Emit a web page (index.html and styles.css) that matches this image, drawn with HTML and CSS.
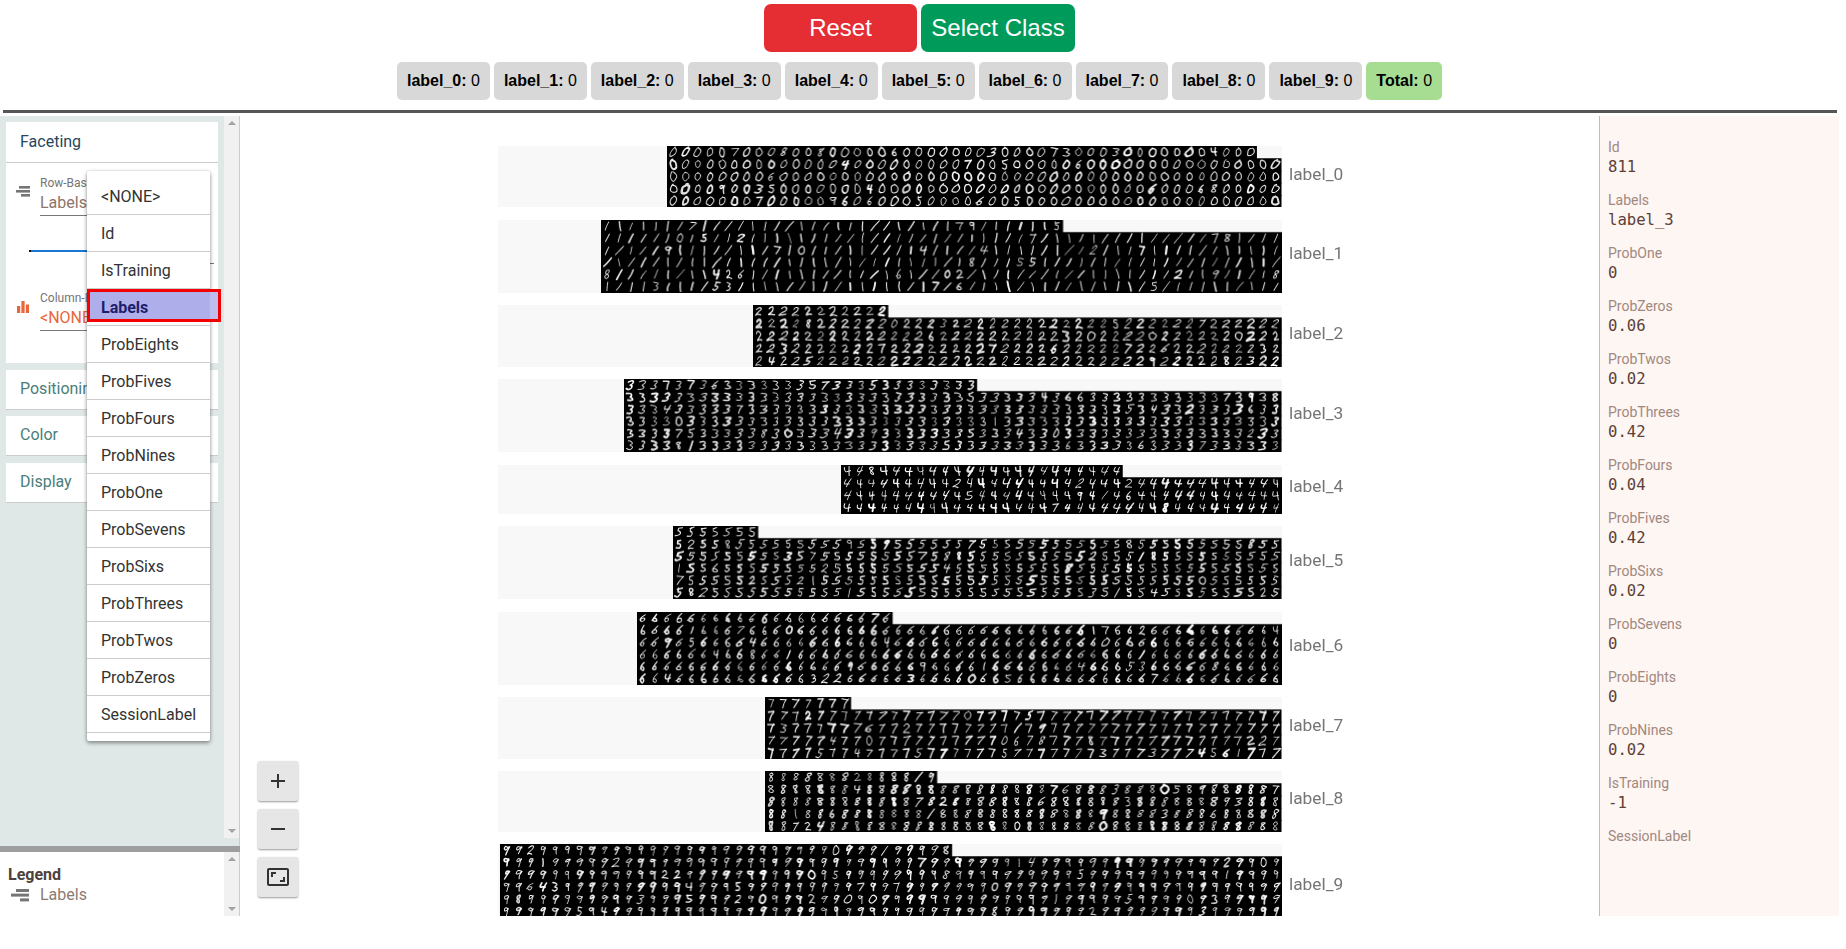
FILE: index.html
```html
<!DOCTYPE html>
<html>
<head>
  <title>Image Facets</title>
  <link rel="stylesheet" href="styles.css">
</head>
<body>
<div class="app">
  <div class="toolbar">
    <div class="actions">
      <button class="btn btn-reset">Reset</button>
      <button class="btn btn-select">Select Class</button>
    </div>
    <div class="counts">
      <span class="chip"><b>label_0:</b> 0</span>
      <span class="chip"><b>label_1:</b> 0</span>
      <span class="chip"><b>label_2:</b> 0</span>
      <span class="chip"><b>label_3:</b> 0</span>
      <span class="chip"><b>label_4:</b> 0</span>
      <span class="chip"><b>label_5:</b> 0</span>
      <span class="chip"><b>label_6:</b> 0</span>
      <span class="chip"><b>label_7:</b> 0</span>
      <span class="chip"><b>label_8:</b> 0</span>
      <span class="chip"><b>label_9:</b> 0</span>
      <span class="chip chip-total"><b>Total:</b> 0</span>
    </div>
  </div>
  <div class="divider"></div>

  <div class="workspace">
    <div class="sidebar">
      <div class="controls">
        <div class="controls-body">
          <div class="card">
            <div class="card-title">Faceting</div>
            <div class="card-body">
              <div class="field">
                <svg class="field-icon" width="14" height="11" viewBox="0 0 14 11"><rect x="3" y="0" width="11" height="2.6" fill="#757575"/><rect x="0" y="4" width="14" height="2.6" fill="#757575"/><rect x="5" y="8" width="9" height="2.6" fill="#757575"/></svg>
                <div class="field-text">
                  <div class="field-label">Row-Based Faceting</div>
                  <div class="field-value">Labels</div>
                </div>
              </div>
              <div class="slider"></div>
              <div class="slider-end"></div>
              <div class="field field-column">
                <svg class="field-icon" width="12" height="12" viewBox="0 0 12 12"><rect x="0" y="5" width="3.2" height="7" fill="#e9663a"/><rect x="4.4" y="0" width="3.2" height="12" fill="#e9663a"/><rect x="8.8" y="3.5" width="3.2" height="8.5" fill="#e9663a"/></svg>
                <div class="field-text">
                  <div class="field-label">Column-Based Faceting</div>
                  <div class="field-value field-value-none">&lt;NONE&gt;</div>
                </div>
              </div>
            </div>
          </div>
          <div class="card card-closed"><div class="card-title">Positioning</div></div>
          <div class="card card-closed"><div class="card-title">Color</div></div>
          <div class="card card-closed"><div class="card-title">Display</div></div>
        </div>
        <div class="scrollbar scrollbar-controls"><i class="arrow-up"></i><i class="arrow-down"></i></div>
      </div>
      <div class="resize-bar"></div>
      <div class="legend">
        <div class="legend-body">
          <div class="legend-title">Legend</div>
          <div class="legend-item">
            <svg width="18" height="13" viewBox="0 0 18 13"><rect x="5" y="0" width="13" height="3" fill="#757575"/><rect x="0" y="4.6" width="18" height="3" fill="#757575"/><rect x="9" y="9.4" width="9" height="3" fill="#757575"/></svg>
            <span>Labels</span>
          </div>
        </div>
        <div class="scrollbar"><i class="arrow-up"></i><i class="arrow-down"></i></div>
      </div>

      <ul class="menu">
        <li>&lt;NONE&gt;</li>
        <li>Id</li>
        <li>IsTraining</li>
        <li class="selected"><span>Labels</span></li>
        <li>ProbEights</li>
        <li>ProbFives</li>
        <li>ProbFours</li>
        <li>ProbNines</li>
        <li>ProbOne</li>
        <li>ProbSevens</li>
        <li>ProbSixs</li>
        <li>ProbThrees</li>
        <li>ProbTwos</li>
        <li>ProbZeros</li>
        <li>SessionLabel</li>
      </ul>
    </div>

    <div class="chart">
      <div id="facets" class="facets"></div>
      <div class="zoom-tools">
        <button class="zoom-btn"><svg width="24" height="24" viewBox="0 0 24 24"><path d="M19 13h-6v6h-2v-6H5v-2h6V5h2v6h6v2z"/></svg></button>
        <button class="zoom-btn"><svg width="24" height="24" viewBox="0 0 24 24"><path d="M19 13H5v-2h14v2z"/></svg></button>
        <button class="zoom-btn"><svg width="24" height="24" viewBox="0 0 24 24"><path d="M19 12h-2v3h-3v2h5v-5zM7 9h3V7H5v5h2V9zm14-6H3c-1.1 0-2 .9-2 2v14c0 1.1.9 2 2 2h18c1.1 0 2-.9 2-2V5c0-1.1-.9-2-2-2zm0 16.01H3V4.99h18v14.02z"/></svg></button>
      </div>
    </div>

    <div class="details">
      <div class="detail"><div class="detail-key">Id</div><div class="detail-value">811</div></div>
      <div class="detail"><div class="detail-key">Labels</div><div class="detail-value">label_3</div></div>
      <div class="detail"><div class="detail-key">ProbOne</div><div class="detail-value">0</div></div>
      <div class="detail"><div class="detail-key">ProbZeros</div><div class="detail-value">0.06</div></div>
      <div class="detail"><div class="detail-key">ProbTwos</div><div class="detail-value">0.02</div></div>
      <div class="detail"><div class="detail-key">ProbThrees</div><div class="detail-value">0.42</div></div>
      <div class="detail"><div class="detail-key">ProbFours</div><div class="detail-value">0.04</div></div>
      <div class="detail"><div class="detail-key">ProbFives</div><div class="detail-value">0.42</div></div>
      <div class="detail"><div class="detail-key">ProbSixs</div><div class="detail-value">0.02</div></div>
      <div class="detail"><div class="detail-key">ProbSevens</div><div class="detail-value">0</div></div>
      <div class="detail"><div class="detail-key">ProbEights</div><div class="detail-value">0</div></div>
      <div class="detail"><div class="detail-key">ProbNines</div><div class="detail-value">0.02</div></div>
      <div class="detail"><div class="detail-key">IsTraining</div><div class="detail-value">-1</div></div>
      <div class="detail"><div class="detail-key">SessionLabel</div><div class="detail-value"></div></div>
    </div>
  </div>
</div>
<script src="app.js"></script>
</body>
</html>
```

FILE: styles.css
```css
body {
  margin: 0;
  padding: 0;
  background-color: #fff;
  font-family: "Roboto", "Liberation Sans", sans-serif;
  overflow: hidden;
}

.app {
  width: 1839px;
}

/* top bar */
.toolbar {
  padding-top: 4px;
  font-family: "Liberation Sans", Arial, sans-serif;
}
.actions {
  display: flex;
  justify-content: center;
  gap: 4px;
}
.btn {
  height: 48px;
  width: 153px;
  padding: 0;
  border: none;
  border-radius: 7px;
  color: #fff;
  font-family: inherit;
  font-size: 24px;
}
.btn-reset {
  background-color: #e52d34;
}
.btn-select {
  width: 154px;
  background-color: #009b5b;
}
.counts {
  display: flex;
  justify-content: center;
  gap: 4px;
  margin-top: 10px;
}
.chip {
  height: 38px;
  line-height: 38px;
  padding: 0 10px;
  border-radius: 5px;
  background-color: #d8d8d8;
  color: #000;
  font-size: 16px;
}
.chip-total {
  background-color: #a6dd92;
}
.divider {
  height: 3px;
  margin: 10px 2px 3px 3px;
  background-color: #555;
}

.workspace {
  display: flex;
  height: 800px;
}

/* left column */
.sidebar {
  position: relative;
  flex: none;
  display: flex;
  flex-direction: column;
  width: 240px;
}
.controls {
  display: flex;
  height: 730px;
  background-color: #dfe8e6;
  border-right: 1px solid #ccc;
}
.controls-body {
  width: 224px;
  padding: 6px 6px 0 6px;
  box-sizing: border-box;
}
.scrollbar {
  position: relative;
  width: 15px;
  background-color: #f1f1f1;
}
.scrollbar-controls {
  height: 722px;
}
.arrow-up, .arrow-down {
  position: absolute;
  left: 4px;
  width: 0;
  height: 0;
  border-left: 4px solid transparent;
  border-right: 4px solid transparent;
}
.arrow-up {
  top: 5px;
  border-bottom: 4px solid #a3a3a3;
}
.arrow-down {
  bottom: 5px;
  border-top: 4px solid #a3a3a3;
}
.card {
  background-color: #fff;
  margin-bottom: 6.5px;
  font-size: 16px;
}
.card-title {
  height: 40px;
  line-height: 40px;
  padding-left: 14px;
  border-bottom: 1px solid #ccc;
  color: #26475c;
}
.card-closed .card-title {
  height: 39px;
  line-height: 38px;
  color: #4b7d79;
}
.card-body {
  height: 200px;
  padding-top: 13px;
  box-sizing: border-box;
}
.field {
  display: flex;
  height: 40px;
  padding-left: 10px;
}
.field-icon {
  flex: none;
  margin-top: 10px;
}
.field-text {
  width: 160px;
  margin-left: 10px;
  border-bottom: 1px solid #777;
  white-space: nowrap;
  overflow: hidden;
}
.field-label {
  font-size: 12px;
  line-height: 14px;
  color: #757575;
}
.field-value {
  font-size: 16px;
  line-height: 26px;
  color: #8d7468;
}
.field-value-none {
  color: #e9663a;
}
.field-column {
  margin-top: 27px;
}
.field-column .field-icon {
  margin-left: 1px;
  margin-right: 1px;
  margin-top: 10px;
}
.slider {
  width: 130px;
  height: 2px;
  margin: 34px 0 0 23px;
  background-color: #1976d2;
  border-left: 2px solid #111;
}
.slider-end {
  width: 4px;
  height: 1px;
  margin: 11px 0 0 204px;
  background-color: #777;
}
.resize-bar {
  height: 6px;
  background-color: #9e9e9e;
}
.legend {
  display: flex;
  height: 64px;
  border-right: 1px solid #ccc;
}
.legend-body {
  width: 224px;
  padding: 14px 0 0 8px;
  box-sizing: border-box;
}
.legend-title {
  font-size: 16px;
  line-height: 18px;
  font-weight: bold;
  color: #4e413c;
}
.legend-item {
  display: flex;
  align-items: center;
  margin: 1px 0 0 3px;
  font-size: 16px;
  line-height: 20px;
  color: #8d7a73;
}
.legend-item span {
  margin-left: 11px;
}

/* open dropdown */
.menu {
  position: absolute;
  left: 87px;
  top: 55px;
  width: 123px;
  margin: 0;
  padding: 7px 0 8px 0;
  list-style: none;
  background-color: #fff;
  border-radius: 2px;
  box-shadow: 0 2px 4px rgba(0, 0, 0, 0.4), 0 0 3px rgba(0, 0, 0, 0.12);
}
.menu li {
  position: relative;
  height: 36px;
  line-height: 37px;
  padding-left: 14px;
  border-bottom: 1px solid #ccc;
  font-size: 16px;
  color: #333;
}
.menu li.selected {
  font-weight: bold;
  color: #1e1e6e;
}
.menu li.selected span {
  position: relative;
  z-index: 1;
}
.menu li.selected::before {
  content: "";
  position: absolute;
  left: 0;
  top: 0;
  width: 128px;
  height: 27px;
  border: 3px solid #f50000;
  background: linear-gradient(to right, #aeaeea 120px, #bdbdf0 120px);
}

/* chart */
.chart {
  position: relative;
  flex: none;
  width: 1359px;
  height: 800px;
  overflow: hidden;
}
.facets {
  display: flex;
  flex-direction: column;
  gap: 12.25px;
  padding: 30px 0 0 258px;
}
.facet {
  display: flex;
  align-items: center;
}
.band {
  flex: none;
  display: flex;
  justify-content: flex-end;
  width: 784px;
  background-color: #f8f8f8;
}
.band canvas {
  display: block;
}
.facet-label {
  margin: 0 0 6px 7px;
  font-size: 17.3px;
  color: #757575;
}
.zoom-tools {
  position: absolute;
  left: 18px;
  top: 645px;
  display: flex;
  flex-direction: column;
  gap: 8px;
}
.zoom-btn {
  display: flex;
  align-items: center;
  justify-content: center;
  width: 40px;
  height: 40px;
  padding: 0;
  border: none;
  border-radius: 2px;
  background-color: #e6e6e6;
  box-shadow: 0 1px 2px rgba(0, 0, 0, 0.4);
}
.zoom-btn svg {
  fill: #333;
}

/* right column */
.details {
  flex: none;
  width: 240px;
  height: 800px;
  padding: 22px 0 0 8px;
  box-sizing: border-box;
  background-color: #fef6f3;
  border-left: 1px solid #bdbdbd;
}
.detail {
  height: 53px;
}
.detail-key {
  font-size: 14px;
  line-height: 19px;
  color: #a1887f;
}
.detail-value {
  font-family: "DejaVu Sans Mono", "Liberation Mono", monospace;
  font-size: 15.6px;
  line-height: 21px;
  color: #5d4037;
}
```

FILE: app.js
```js
// one entry per facet: how many cells wide, how many rows, cells in the (partial) top row
var facets = [
  { label: 'label_0', cols: 50, rows: 5, top: 48 },
  { label: 'label_1', cols: 56, rows: 6, top: 38 },
  { label: 'label_2', cols: 43, rows: 5, top: 11 },
  { label: 'label_3', cols: 54, rows: 6, top: 29 },
  { label: 'label_4', cols: 36, rows: 4, top: 23 },
  { label: 'label_5', cols: 50, rows: 6, top: 7 },
  { label: 'label_6', cols: 53, rows: 6, top: 21 },
  { label: 'label_7', cols: 42, rows: 5, top: 7 },
  { label: 'label_8', cols: 42, rows: 5, top: 14 },
  { label: 'label_9', cols: 64, rows: 7, top: 37 }
];

var CELL = 12.25;

// pen strokes of each digit on a 28x28 grid
var strokes = [
  [[[14,5],[19,7],[21,13],[20,19],[15,23],[10,22],[7,17],[8,10],[11,6],[14,5]]],
  [[[15,5],[14,14],[13,23]]],
  [[[8,9],[11,5],[17,5],[19,9],[16,14],[10,19],[7,23],[13,21],[21,22]]],
  [[[8,6],[14,5],[19,7],[18,11],[12,14],[18,15],[20,19],[15,23],[8,22]]],
  [[[9,6],[7,14],[13,15],[20,14]], [[18,5],[17,14],[17,23]]],
  [[[19,5],[10,6]], [[10,6],[9,13],[15,12],[19,16],[17,21],[12,23],[7,21]]],
  [[[17,5],[11,10],[8,17],[11,22],[16,22],[18,18],[15,14],[10,15],[8,18]]],
  [[[7,6],[20,6]], [[20,6],[15,14],[12,23]]],
  [[[17,6],[12,5],[9,8],[12,13],[18,17],[17,22],[11,22],[10,17],[15,12],[19,8],[17,6]]],
  [[[19,8],[14,5],[9,8],[10,13],[15,13],[19,8]], [[19,8],[17,16],[16,23]]]
];

function seeded(seed) {
  return function() {
    seed = (seed + 0x6D2B79F5) | 0;
    var t = Math.imul(seed ^ (seed >>> 15), 1 | seed);
    t = (t + Math.imul(t ^ (t >>> 7), 61 | t)) ^ t;
    return ((t ^ (t >>> 14)) >>> 0) / 4294967296;
  };
}

function drawDigit(ctx, digit, x, y, rand) {
  var lean = digit == 1 ? (rand() - 0.3) * 1.1 : (rand() - 0.25) * 0.6;
  var scaleX = 0.8 + rand() * 0.35;
  var scaleY = 0.95 + rand() * 0.18;
  var k = CELL / 28;

  ctx.save();
  ctx.translate(x + CELL / 2, y + CELL / 2);
  ctx.transform(k * scaleX, 0, -k * lean * scaleY, k * scaleY, 0, 0);
  ctx.translate(-14, -14);
  ctx.lineWidth = 2 + rand() * rand() * 3.4;
  ctx.lineCap = 'round';
  ctx.lineJoin = 'round';
  ctx.strokeStyle = 'rgba(255,255,255,' + (0.8 + rand() * 0.2) + ')';

  strokes[digit].forEach(function(line) {
    var pts = line.map(function(p) {
      return [p[0] + (rand() - 0.5) * 3.2, p[1] + (rand() - 0.5) * 3.2];
    });
    ctx.beginPath();
    ctx.moveTo(pts[0][0], pts[0][1]);
    for (var i = 1; i < pts.length - 1; i++) {
      ctx.quadraticCurveTo(pts[i][0], pts[i][1], (pts[i][0] + pts[i + 1][0]) / 2, (pts[i][1] + pts[i + 1][1]) / 2);
    }
    ctx.lineTo(pts[pts.length - 1][0], pts[pts.length - 1][1]);
    ctx.stroke();
  });
  ctx.restore();
}

function drawFacet(canvas, facet, index) {
  var ctx = canvas.getContext('2d');
  var rand = seeded(811 + index * 97);

  for (var r = 0; r < facet.rows; r++) {
    var count = r == 0 ? facet.top : facet.cols;
    ctx.fillStyle = '#000';
    ctx.fillRect(0, r * CELL, count * CELL, CELL + 1);
    ctx.filter = 'blur(0.3px)';
    for (var c = 0; c < count; c++) {
      // a few images in every class look like another digit
      var digit = rand() < 0.12 ? Math.floor(rand() * 10) : index;
      drawDigit(ctx, digit, c * CELL, r * CELL, rand);
    }
    ctx.filter = 'none';
  }
}

var holder = document.getElementById('facets');
facets.forEach(function(facet, index) {
  var row = document.createElement('div');
  row.className = 'facet';

  var band = document.createElement('div');
  band.className = 'band';
  band.style.height = facet.rows * CELL + 'px';

  var canvas = document.createElement('canvas');
  canvas.width = Math.round(facet.cols * CELL);
  canvas.height = Math.round(facet.rows * CELL);
  band.appendChild(canvas);
  drawFacet(canvas, facet, index);

  var label = document.createElement('span');
  label.className = 'facet-label';
  label.textContent = facet.label;

  row.appendChild(band);
  row.appendChild(label);
  holder.appendChild(row);
});
```
